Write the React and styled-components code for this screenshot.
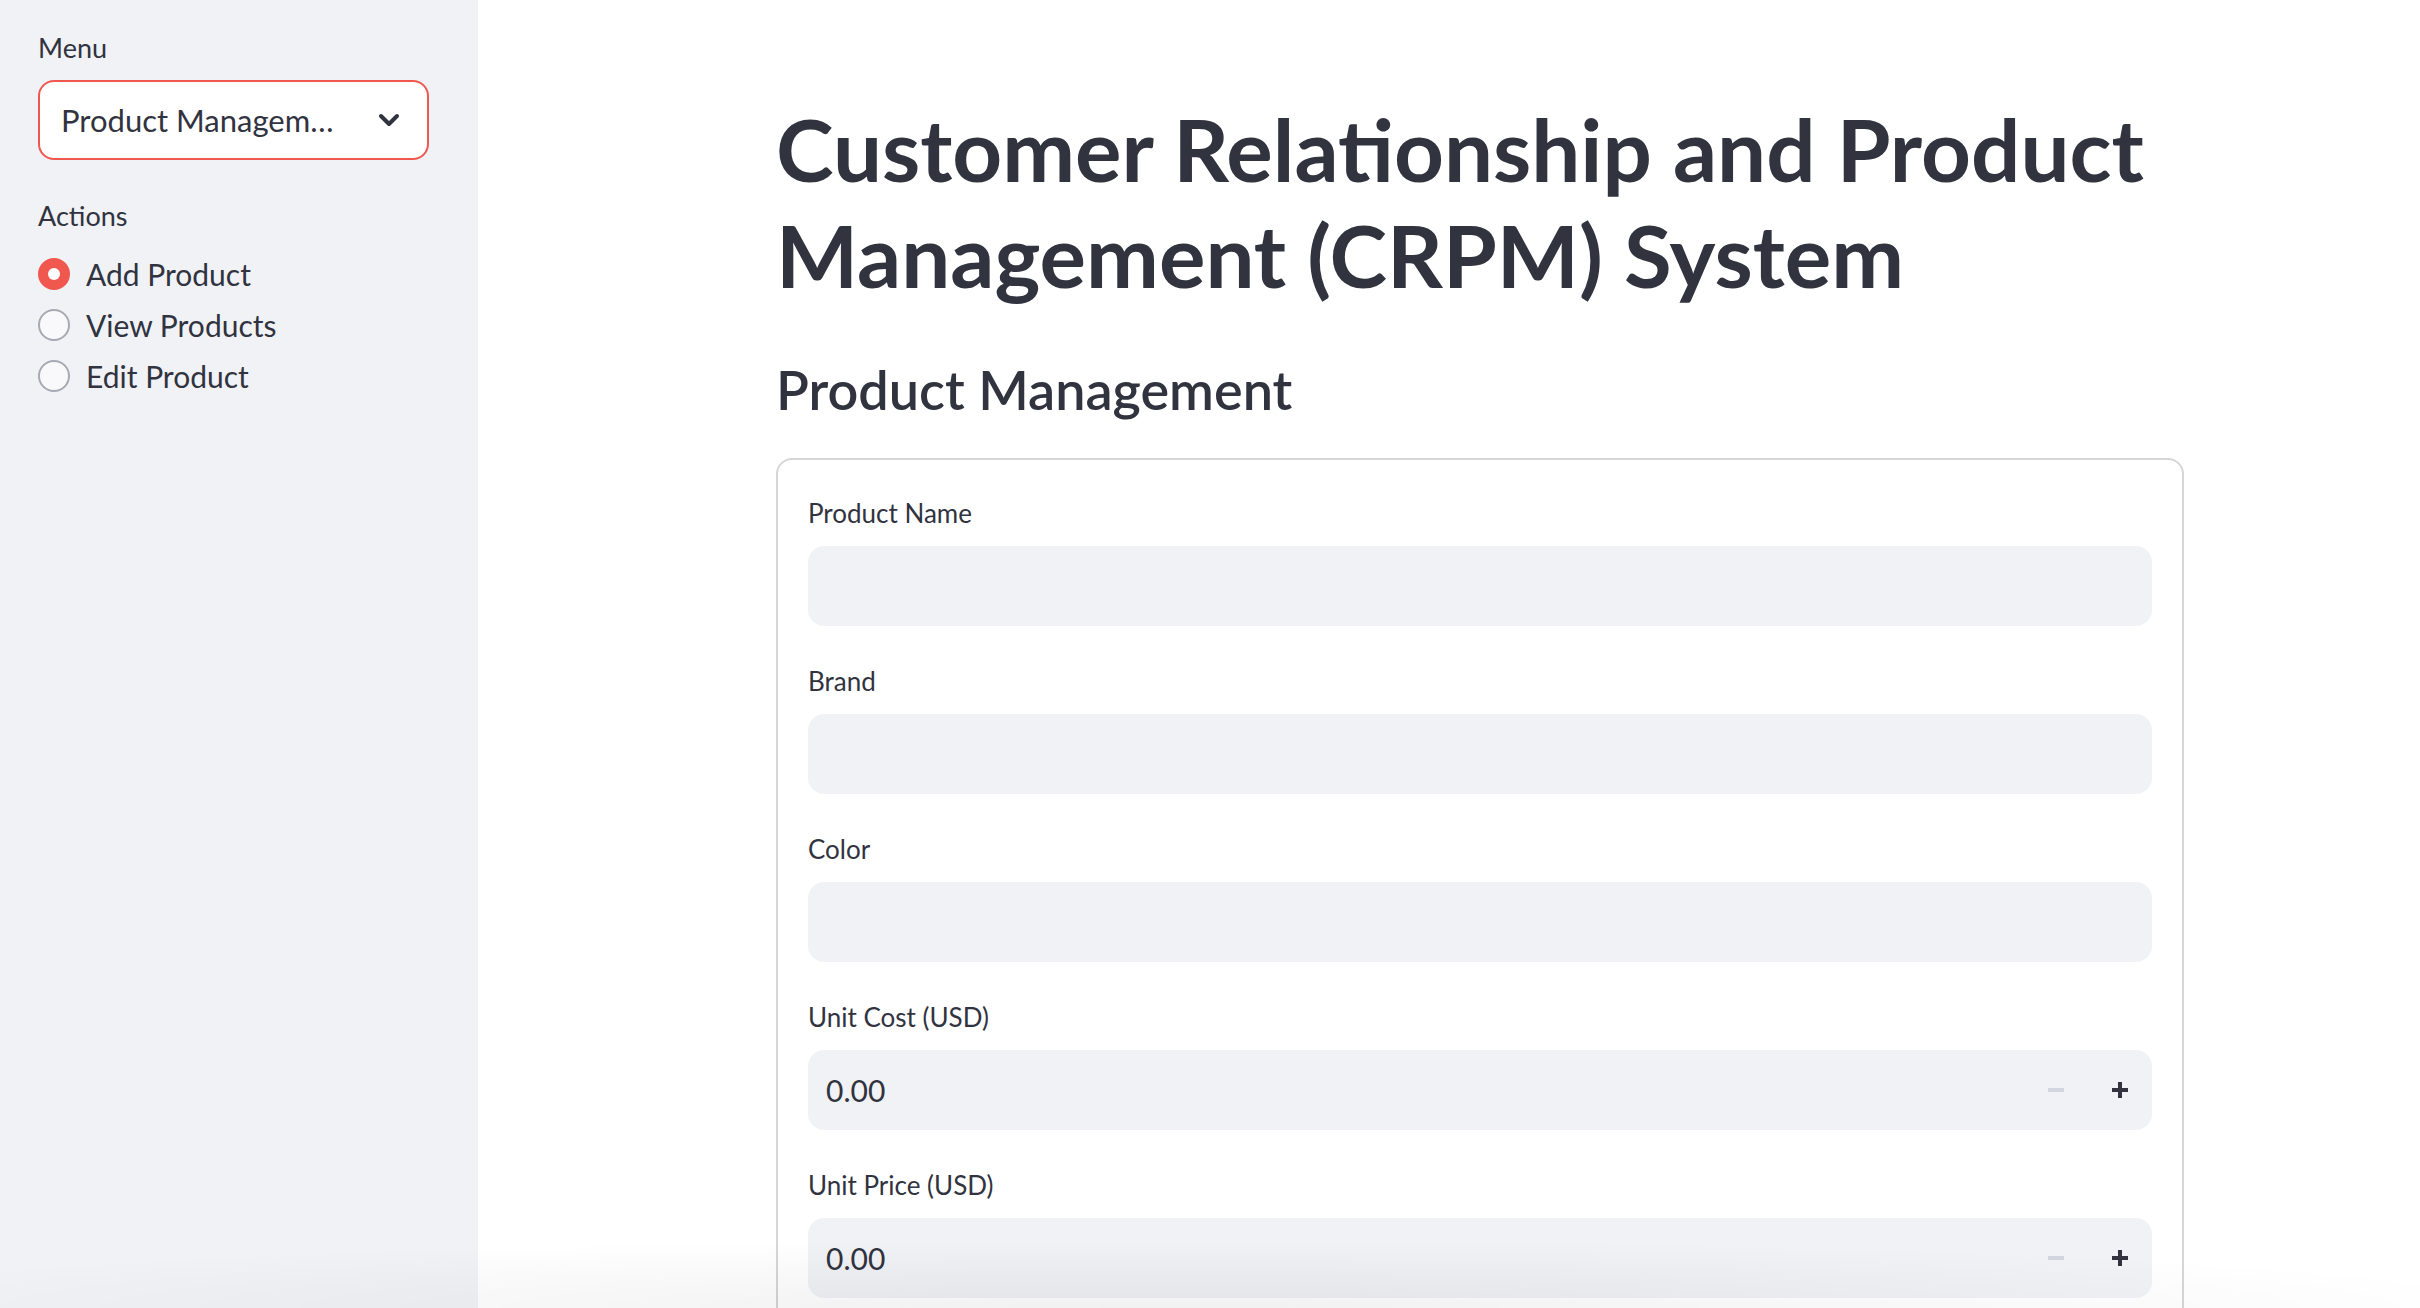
import styled, { createGlobalStyle } from 'styled-components';

const GlobalStyle = createGlobalStyle`
  html, body {
    margin: 0;
    padding: 0;
    overflow: hidden;
    background: #ffffff;
  }
  body {
    font-family: Lato, "Noto Sans", sans-serif;
    color: #31333f;
  }
  * {
    box-sizing: border-box;
  }
`;

const fields = [
  { label: 'Product Name', type: 'text' },
  { label: 'Brand', type: 'text' },
  { label: 'Color', type: 'text' },
  { label: 'Unit Cost (USD)', type: 'number' },
  { label: 'Unit Price (USD)', type: 'number' },
];

const actions = ['Add Product', 'View Products', 'Edit Product'];

export default function App() {
  return (
    <Shell>
      <GlobalStyle />
      <Sidebar>
        <SideLabel>Menu</SideLabel>
        <Select>
          <SelectValue>Product Management</SelectValue>
          <svg width="22" height="14" viewBox="0 0 22 14">
            <polyline
              points="3,3 11,11 19,3"
              fill="none"
              stroke="#31333f"
              strokeWidth="4"
              strokeLinecap="round"
              strokeLinejoin="round"
            />
          </svg>
        </Select>
        <SideLabel $top={36}>Actions</SideLabel>
        <RadioGroup>
          {actions.map((a, i) => (
            <RadioRow key={a}>
              <RadioDot $checked={i === 0} />
              <span>{a}</span>
            </RadioRow>
          ))}
        </RadioGroup>
      </Sidebar>

      <Main>
        <Content>
          <Title>Customer Relationship and Product Management (CRPM) System</Title>
          <Subheader>Product Management</Subheader>
          <Form>
            {fields.map(f => (
              <Field key={f.label}>
                <FieldLabel>{f.label}</FieldLabel>
                {f.type === 'text' ? (
                  <TextBox />
                ) : (
                  <NumberBox>
                    <NumberValue>0.00</NumberValue>
                    <StepButton $disabled>
                      <svg width="16" height="16" viewBox="0 0 16 16">
                        <rect x="0" y="6" width="16" height="4" fill="currentColor" />
                      </svg>
                    </StepButton>
                    <StepButton>
                      <svg width="16" height="16" viewBox="0 0 16 16">
                        <rect x="0" y="6" width="16" height="4" fill="currentColor" />
                        <rect x="6" y="0" width="4" height="16" fill="currentColor" />
                      </svg>
                    </StepButton>
                  </NumberBox>
                )}
              </Field>
            ))}
          </Form>
        </Content>
      </Main>
      <BottomFade />
    </Shell>
  );
}

const Shell = styled.div`
  display: flex;
  height: 100vh;
  overflow: hidden;
`;

const Sidebar = styled.aside`
  flex: 0 0 478px;
  background: #f0f2f6;
  padding: 28px 49px 0 38px;
  display: flex;
  flex-direction: column;
`;

const SideLabel = styled.div`
  font-size: 27px;
  line-height: 40px;
  margin-top: ${p => p.$top || 0}px;
  margin-bottom: 12px;
`;

const Select = styled.div`
  height: 80px;
  width: 391px;
  background: #ffffff;
  border: 2px solid #f0584f;
  border-radius: 16px;
  display: flex;
  align-items: center;
  padding: 0 27px 0 21px;
  gap: 40px;
  font-size: 31px;
`;

const SelectValue = styled.span`
  flex: 1;
  min-width: 0;
  white-space: nowrap;
  overflow: hidden;
  text-overflow: ellipsis;
`;

const RadioGroup = styled.div`
  display: flex;
  flex-direction: column;
`;

const RadioRow = styled.div`
  height: 51px;
  display: flex;
  align-items: center;
  gap: 16px;
  font-size: 30px;
`;

const RadioDot = styled.span`
  width: 32px;
  height: 32px;
  border-radius: 50%;
  flex: none;
  display: flex;
  align-items: center;
  justify-content: center;
  background: ${p => (p.$checked ? '#f0584f' : '#f9f9fb')};
  border: 2px solid ${p => (p.$checked ? '#f0584f' : '#a7a9b3')};

  &::after {
    content: '';
    width: 12px;
    height: 12px;
    border-radius: 50%;
    background: #ffffff;
    display: ${p => (p.$checked ? 'block' : 'none')};
  }
`;

const Main = styled.main`
  flex: 1;
  padding: 96px 0 0 298px;
`;

const Content = styled.div`
  width: 1408px;
`;

const Title = styled.h1`
  margin: 0;
  font-size: 87px;
  line-height: 106px;
  font-weight: 700;
  color: #31333f;
`;

const Subheader = styled.h3`
  margin: 47px 0 33px;
  font-size: 54px;
  line-height: 70px;
  font-weight: 600;
  color: #31333f;
`;

const Form = styled.div`
  border: 2px solid #d6d6d9;
  border-radius: 16px;
  padding: 33px 30px 30px;
  display: flex;
  flex-direction: column;
  gap: 35px;
`;

const Field = styled.div`
  display: flex;
  flex-direction: column;
  gap: 13px;
`;

const FieldLabel = styled.label`
  font-size: 26px;
  line-height: 40px;
`;

const TextBox = styled.div`
  height: 80px;
  background: #f0f2f6;
  border-radius: 16px;
`;

const NumberBox = styled.div`
  height: 80px;
  background: #f0f2f6;
  border-radius: 16px;
  display: flex;
  align-items: center;
  padding-left: 18px;
`;

const NumberValue = styled.span`
  flex: 1;
  font-size: 30px;
`;

const StepButton = styled.span`
  width: 64px;
  height: 80px;
  display: flex;
  align-items: center;
  justify-content: center;
  color: ${p => (p.$disabled ? '#d3d6de' : '#31333f')};
`;

const BottomFade = styled.div`
  position: fixed;
  left: 0;
  right: 0;
  bottom: 0;
  height: 70px;
  pointer-events: none;
  background: radial-gradient(
    ellipse 1400px 70px at 1150px 100%,
    rgba(0, 0, 0, 0.055),
    rgba(0, 0, 0, 0)
  );
`;
